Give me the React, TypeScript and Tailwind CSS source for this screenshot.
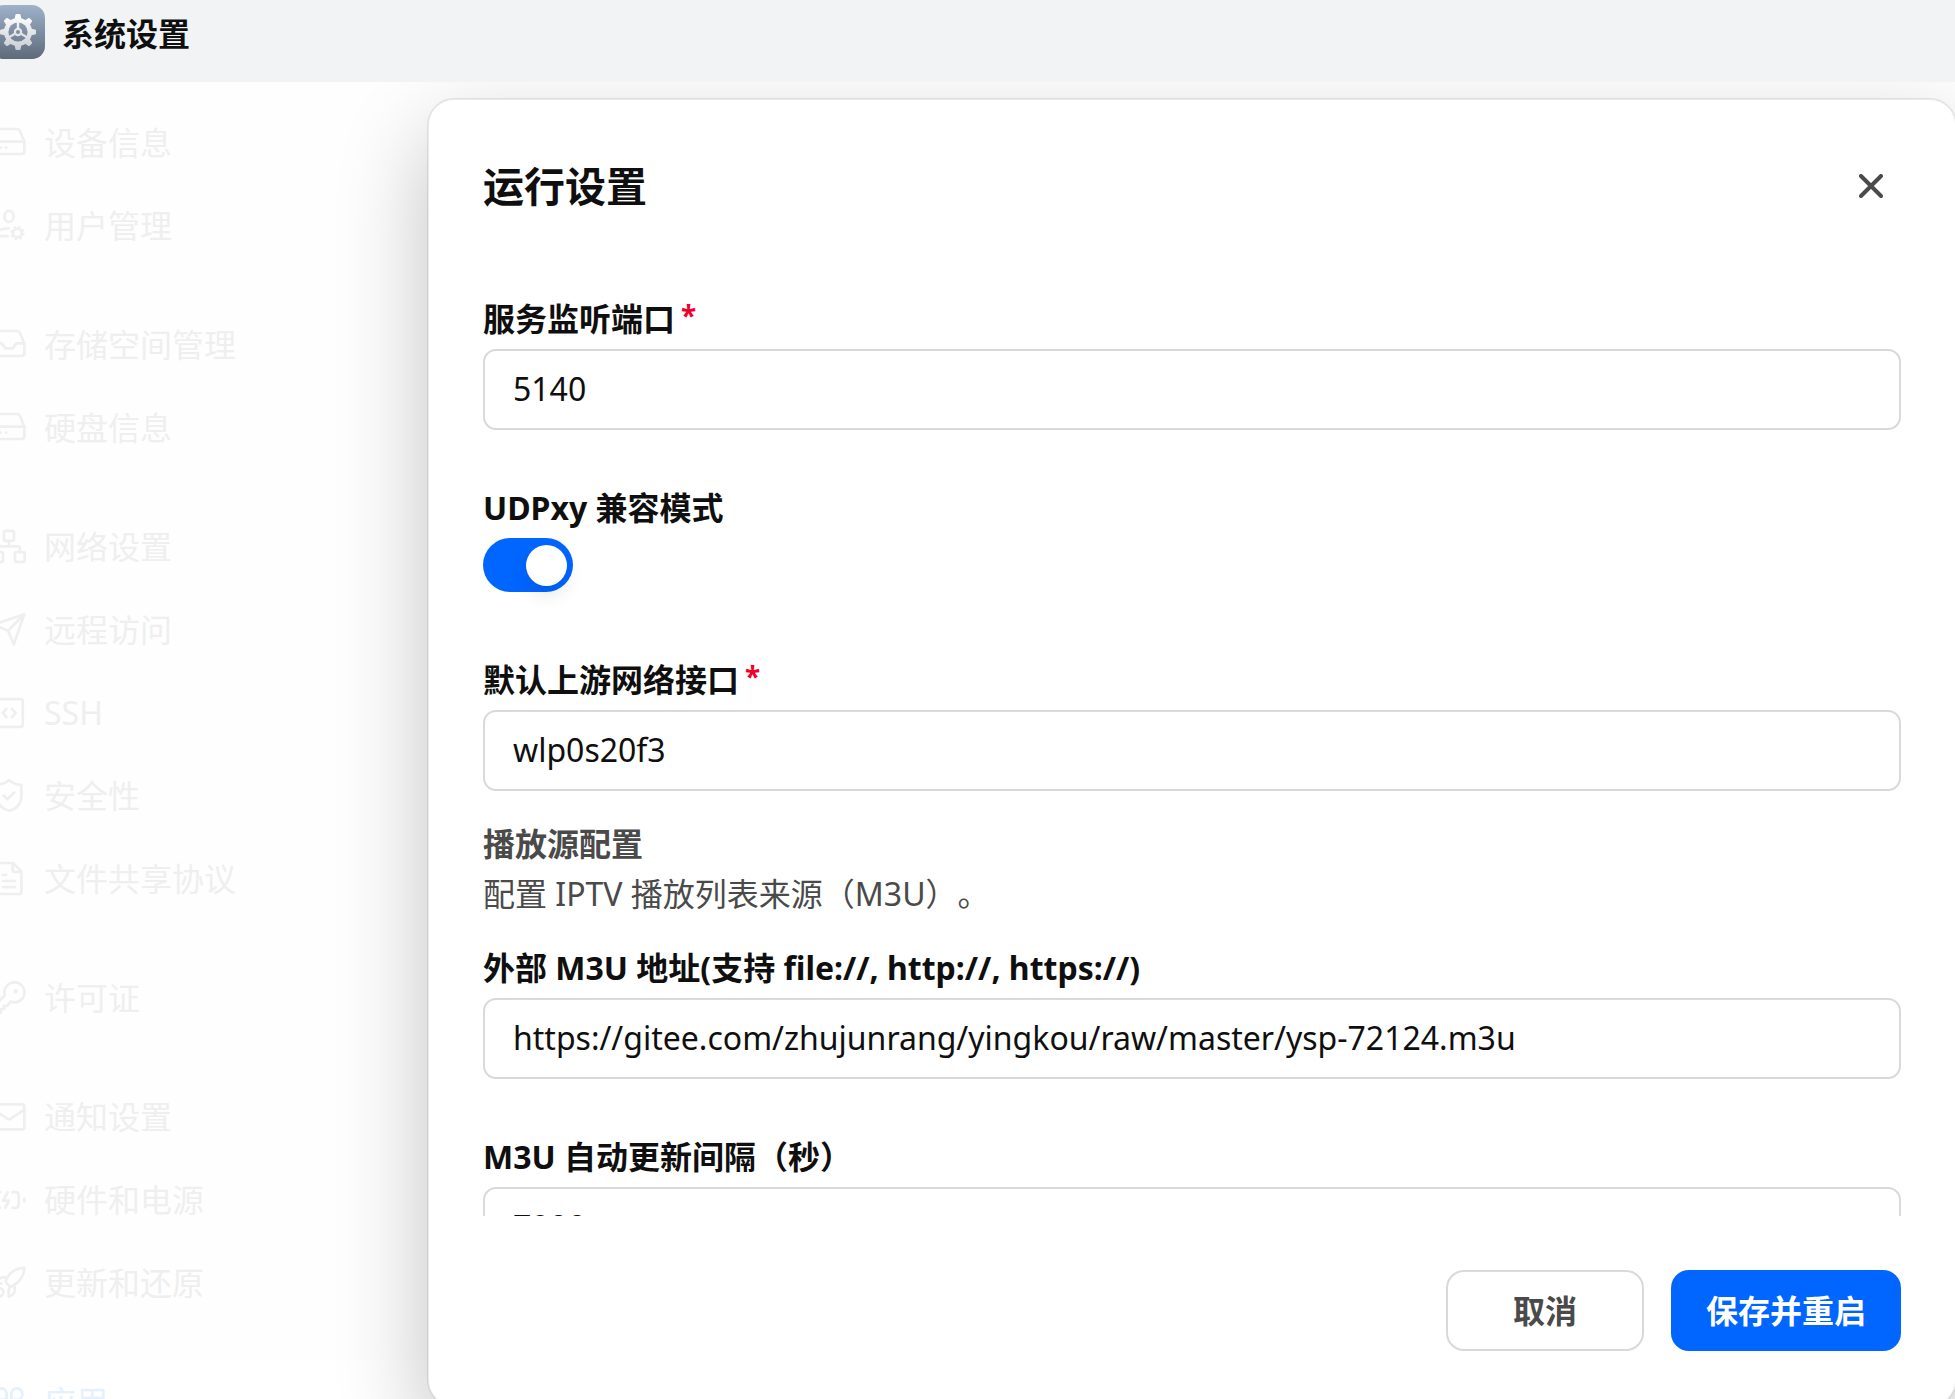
import { useId, useState, type InputHTMLAttributes, type ReactNode } from "react";

const font = "font-['Noto_Sans','Noto_Sans_CJK_SC',sans-serif] [text-spacing-trim:space-all]";

function Glyph({ children }: { children: ReactNode }) {
  return (
    <svg
      viewBox="0 0 36 36"
      className="size-9 shrink-0"
      fill="none"
      stroke="currentColor"
      strokeWidth="2.7"
      strokeLinecap="round"
      strokeLinejoin="round"
      aria-hidden="true"
    >
      {children}
    </svg>
  );
}

const caseOutline =
  "M2.6 17 6.9 6Q7.8 4 10 4H26Q28.2 4 29.1 6L33.4 17V26Q33.4 29 30.4 29H5.6Q2.6 29 2.6 26Z";

const drive = (
  <Glyph>
    <path d={caseOutline} />
    <path d="M2.6 16.6H33.4" />
    <path d="M9.7 22.6h.02M15 22.6h.02" strokeWidth="2.9" />
  </Glyph>
);

const tray = (
  <Glyph>
    <path d={caseOutline} />
    <path d="M2.6 16.4H10.8L14.4 21.4H21.6L25.2 16.4H33.4" />
  </Glyph>
);

const user = (
  <Glyph>
    <ellipse cx="18" cy="8.4" rx="4.6" ry="5.6" />
    <path d="M17.6 20.4C10 20.6 4.6 23.6 3 28.2H16.6" />
    <circle cx="26.4" cy="25" r="4.4" />
    <circle cx="26.4" cy="25" r="6.2" strokeWidth="2" strokeLinecap="butt" strokeDasharray="2.6 2.27" />
  </Glyph>
);

const network = (
  <Glyph>
    <rect x="13" y="1.8" width="10" height="10" rx="1.8" />
    <rect x="2.4" y="23" width="9.6" height="10" rx="1.8" />
    <rect x="24" y="23" width="9.6" height="10" rx="1.8" />
    <path d="M18 11.8V17.4M7.2 23V19.4Q7.2 17.4 9.2 17.4H26.8Q28.8 17.4 28.8 19.4V23" />
  </Glyph>
);

const plane = (
  <Glyph>
    <path d="M33.2 2.2 22.8 32.4 17 18.8 2.8 12.6ZM33.2 2.2 17 18.8" />
  </Glyph>
);

const terminal = (
  <Glyph>
    <rect x="4.2" y="4.2" width="27.6" height="27.6" rx="2.4" />
    <path d="M15.4 13.8 11.8 18 15.4 22.2M21 13.8 24.6 18 21 22.2" />
  </Glyph>
);

const shield = (
  <Glyph>
    <path d="M18 2.2C14.6 5.2 10.6 6.6 5.6 6.8V17.4C5.6 25.8 10.6 30.8 18 32.8 25.4 30.8 30.4 25.8 30.4 17.4V6.8C25.4 6.6 21.4 5.2 18 2.2Z" />
    <path d="M12.6 17.6 16.4 21.2 23.4 14.4" />
  </Glyph>
);

const fileText = (
  <Glyph>
    <path d="M22 2H8.2Q5.6 2 5.6 4.6V30.4Q5.6 33 8.2 33H27.8Q30.4 33 30.4 30.4V10.4ZM21.6 2.2V8.4Q21.6 10.8 24 10.8H30" />
    <path d="M11.8 13.8H15M11.8 20H24M11.8 26.2H24" />
  </Glyph>
);

const key = (
  <Glyph>
    <path d="M23.4 2.4A10 10 0 0 0 13.8 15.2L3 26V32.8H9.8V29.2H13V25.8H16.4L19.6 21.6A10 10 0 1 0 23.4 2.4Z" />
    <circle cx="24.6" cy="11.2" r="2.2" fill="currentColor" stroke="none" />
  </Glyph>
);

const mail = (
  <Glyph>
    <rect x="2.6" y="5.4" width="30.8" height="25" rx="2.4" />
    <path d="M3 10.8 16.6 19.8Q18 20.6 19.4 19.8L33 10.8" />
  </Glyph>
);

const battery = (
  <Glyph>
    <path d="M9.4 10.2H6.4Q3.4 10.2 3.4 13.2V22.8Q3.4 25.8 6.4 25.8H9" />
    <path d="M21.4 10.2H24.6Q27.6 10.2 27.6 13.2V22.8Q27.6 25.8 24.6 25.8H21.4" />
    <path d="M16.6 10.4 12 18.6H18L14.2 25.8M33.4 16.8V19.4" />
  </Glyph>
);

const rocket = (
  <Glyph>
    <path d="M33.4 2.8C24.4 3 18 8 14.8 15.6Q14.6 17 15.6 18.2L18.4 21Q19.6 21.8 21 21.2C28.4 17.4 33 11.6 33.4 2.8Z" />
    <path d="M15 12.6C9.4 11.6 5.4 14.4 4.6 19.2L10.4 18.6" />
    <path d="M23.6 21.6C25 26.6 22.6 30.4 17.8 31.6L17.6 25.2Q18 22.6 20 21.4" />
    <path d="M8.8 23C4.6 23.4 3.4 27.4 3.4 32.2 8.2 32.6 12.2 31 12.4 27.2Q12 23.6 8.8 23Z" />
  </Glyph>
);

const apps = (
  <Glyph>
    <path d="M15.6 15.6H9.4A5.6 5.6 0 1 1 15.6 9ZM20.4 15.6H26.6A5.6 5.6 0 1 0 20.4 9ZM15.6 20.4H9.4A5.6 5.6 0 1 0 15.6 27ZM20.4 20.4H26.6A5.6 5.6 0 1 1 20.4 27Z" />
  </Glyph>
);

type Item = { label: string; icon: ReactNode; active?: boolean };

const groups: Item[][] = [
  [
    { label: "设备信息", icon: drive },
    { label: "用户管理", icon: user },
  ],
  [
    { label: "存储空间管理", icon: tray },
    { label: "硬盘信息", icon: drive },
  ],
  [
    { label: "网络设置", icon: network },
    { label: "远程访问", icon: plane },
    { label: "SSH", icon: terminal },
    { label: "安全性", icon: shield },
    { label: "文件共享协议", icon: fileText },
  ],
  [{ label: "许可证", icon: key }],
  [
    { label: "通知设置", icon: mail },
    { label: "硬件和电源", icon: battery },
    { label: "更新和还原", icon: rocket },
  ],
  [{ label: "应用", icon: apps, active: true }],
];

function AppIcon() {
  const teeth = [0, 45, 90, 135, 180, 225, 270, 315];
  return (
    <svg viewBox="0 0 54 54" className="size-[54px] shrink-0" aria-hidden="true">
      <defs>
        <linearGradient id="tile" x1="0" y1="0" x2="0" y2="1">
          <stop offset="0" stopColor="#9fb2cb" />
          <stop offset="1" stopColor="#5d6a7a" />
        </linearGradient>
        <linearGradient id="metal" gradientUnits="userSpaceOnUse" x1="0" y1="9" x2="0" y2="45">
          <stop offset="0" stopColor="#ffffff" />
          <stop offset="1" stopColor="#c9ced4" />
        </linearGradient>
        <mask id="gear">
          <g fill="#fff">
            <circle cx="27" cy="27" r="14" />
            {teeth.map((a) => (
              <path
                key={a}
                d="M23.4 15 24.4 10Q24.6 9 25.6 9H28.4Q29.4 9 29.6 10L30.6 15Z"
                transform={`rotate(${a} 27 27)`}
              />
            ))}
          </g>
          <circle cx="27" cy="27" r="9.6" fill="#000" />
          <g stroke="#fff" strokeWidth="2.4">
            <path d="M27 27V16M27 27 17.5 32.5M27 27 36.5 32.5" />
          </g>
          <circle cx="27" cy="27" r="4.2" fill="#fff" />
          <circle cx="27" cy="27" r="2" fill="#000" />
        </mask>
      </defs>
      <rect width="54" height="54" rx="13" fill="url(#tile)" />
      <rect width="54" height="54" fill="url(#metal)" mask="url(#gear)" />
    </svg>
  );
}

function Sidebar() {
  return (
    <nav className="-ml-[9px] flex h-full flex-col gap-9 overflow-hidden bg-[#fefefe] pt-[19px]">
      {groups.map((group) => (
        <ul key={group[0].label}>
          {group.map((item) => (
            <li key={item.label}>
              <a
                href="#"
                className={`flex h-[83px] items-center gap-[17px] text-[32px] leading-[44px] ${
                  item.active ? "bg-white text-[#e5f0ff]" : "text-[#efefef]"
                }`}
              >
                {item.icon}
                {item.label}
              </a>
            </li>
          ))}
        </ul>
      ))}
    </nav>
  );
}

function TextField({
  label,
  required,
  ...rest
}: { label: string; required?: boolean } & InputHTMLAttributes<HTMLInputElement>) {
  const id = useId();
  return (
    <div className="flex flex-col gap-2">
      <label htmlFor={id} className="text-[32px] leading-[44px] font-bold">
        {label}
        {required && <span className="ml-1.5 align-[5px] text-[28px] leading-none text-[#f0002c]">*</span>}
      </label>
      <input
        id={id}
        type="text"
        className="h-[81px] w-full rounded-[13px] border-2 border-[#d9d9d9] bg-white px-7 pb-0.5 text-[32px] outline-none"
        {...rest}
      />
    </div>
  );
}

function Dialog() {
  const [compat, setCompat] = useState(true);
  return (
    <section
      role="dialog"
      aria-labelledby="dialog-title"
      className="absolute top-4 -right-0.5 -bottom-2 left-[427px] flex flex-col rounded-[27px] border-2 border-black/8 bg-white bg-clip-padding px-[54px] shadow-[0_36px_90px_rgba(0,0,0,0.24)]"
    >
      <header className="flex items-center justify-between pt-14">
        <h2 id="dialog-title" className="text-[41px] leading-[60px] font-bold">
          运行设置
        </h2>
        <button type="button" aria-label="关闭" className="flex size-[60px] items-center justify-center text-[#4a4a4a]">
          <svg viewBox="0 0 24 24" className="size-6" stroke="currentColor" strokeWidth="4" strokeLinecap="round" aria-hidden="true">
            <path d="M2 2 22 22M22 2 2 22" />
          </svg>
        </button>
      </header>

      <div className="min-h-0 flex-1 overflow-hidden pt-[81px]">
        <TextField label="服务监听端口" required defaultValue="5140" />

        <div className="mt-14 flex flex-col items-start gap-2">
          <label htmlFor="compat" className="text-[32px] leading-[44px] font-bold">
            UDPxy 兼容模式
          </label>
          <input
            id="compat"
            type="checkbox"
            role="switch"
            checked={compat}
            onChange={(e) => setCompat(e.target.checked)}
            className="flex h-[54px] w-[90px] appearance-none items-center rounded-full bg-[#d9d9d9] px-1.5 before:size-[41px] before:rounded-full before:bg-white before:shadow-[0_9px_18px_rgba(0,0,0,0.1)] before:content-[''] checked:justify-end checked:bg-[#0066ff]"
          />
        </div>

        <div className="mt-[66px]">
          <TextField label="默认上游网络接口" required defaultValue="wlp0s20f3" />
        </div>

        <div className="mt-7 mb-[27px] text-[32px] leading-[50px] text-[#4a4a4a]">
          <h3 className="font-bold">播放源配置</h3>
          <p>配置 IPTV 播放列表来源（M3U）。</p>
        </div>

        <div className="flex flex-col gap-14">
          <TextField
            label="外部 M3U 地址(支持 file://, http://, https://)"
            defaultValue="https://gitee.com/zhujunrang/yingkou/raw/master/ysp-72124.m3u"
          />
          <TextField label="M3U 自动更新间隔（秒）" defaultValue="7200" />
        </div>
      </div>

      <footer className="flex justify-end gap-[27px] pt-[54px] pb-[54px]">
        <button
          type="button"
          className="h-[81px] rounded-[18px] border-2 border-[#d9d9d9] px-[65px] text-[32px] font-bold text-[#4a4a4a]"
        >
          取消
        </button>
        <button type="button" className="h-[81px] rounded-[18px] bg-[#0066ff] px-[35px] text-[32px] font-bold text-white">
          保存并重启
        </button>
      </footer>
    </section>
  );
}

export default function App() {
  return (
    <div lang="zh-CN" className={`flex h-screen flex-col overflow-hidden bg-[#fefefe] text-[#0f0f0f] ${font}`}>
      <header className="-ml-[9px] flex h-[82px] shrink-0 items-center gap-[17px] bg-[#f1f3f5] pb-[18px]">
        <AppIcon />
        <h1 className="pt-1 text-[32px] leading-[44px] font-bold">系统设置</h1>
      </header>
      <main className="relative min-h-0 flex-1 overflow-hidden">
        <Sidebar />
        <Dialog />
      </main>
    </div>
  );
}
